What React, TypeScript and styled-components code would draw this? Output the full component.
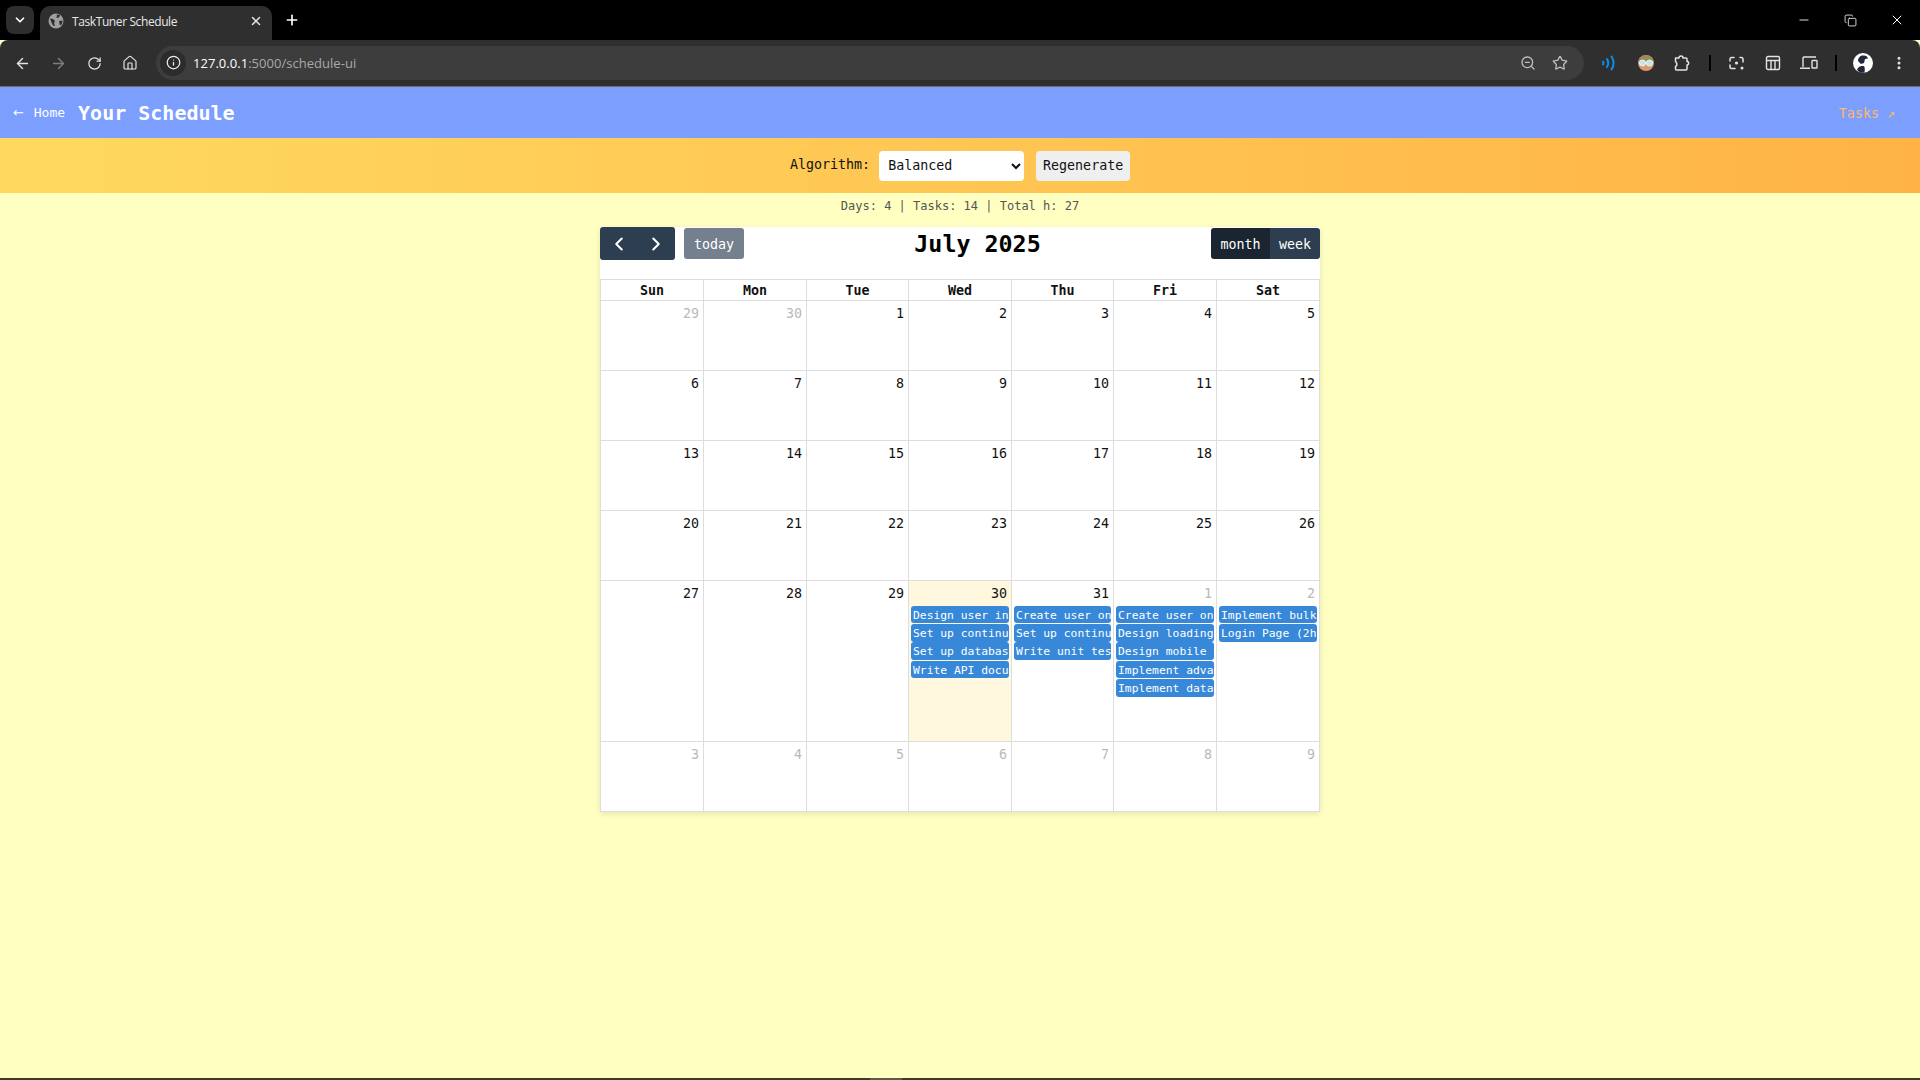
import React from "react";
import styled, { createGlobalStyle } from "styled-components";
import {
    ArrowLeft, ArrowRight, ChevronDown, ChevronLeft, ChevronRight, Copy, EllipsisVertical, House, Info, Minus,
    Plus, RotateCw, Star, X, ZoomOut,
} from "lucide-react";

const GlobalStyle = createGlobalStyle`
    html, body { margin: 0; padding: 0; height: 100%; overflow: hidden; }
    body { font-family: "DejaVu Sans Mono", "Liberation Mono", monospace; background: #ffffc2; }
`;

const Page = styled.div`
    height: 1080px;
    display: flex;
    flex-direction: column;
    background: #ffffc2;
`;

/* browser chrome */
const TabStrip = styled.div`
    height: 40px;
    background: #000;
    display: flex;
    align-items: flex-end;
    padding-left: 6px;
    color: #fff;
`;
const TabMenu = styled.div`
    width: 28px;
    height: 28px;
    margin-bottom: 6px;
    border-radius: 8px;
    background: #2e2e2e;
    display: flex;
    align-items: center;
    justify-content: center;
`;
const Tab = styled.div`
    width: 232px;
    height: 34px;
    margin-left: 6px;
    box-sizing: border-box;
    padding: 0 9px 4px 8px;
    background: #2f2f2f;
    border-radius: 10px 10px 0 0;
    display: flex;
    align-items: center;
    gap: 8px;
    font: 12px "Open Sans", sans-serif;
    color: #e8e8e8;
`;
const TabTitle = styled.span`
    flex: 1;
    letter-spacing: -0.4px;
`;
const NewTab = styled.div`
    width: 20px;
    margin: 0 0 10px 10px;
    height: 20px;
    display: flex;
    align-items: center;
    justify-content: center;
`;
const WindowControls = styled.div`
    margin-left: auto;
    height: 40px;
    display: flex;
    align-items: center;
    padding-right: 15px;
    gap: 32.5px;
`;
const Toolbar = styled.div`
    box-sizing: border-box;
    background: #2f2f2f;
    border-radius: 8px 8px 0 0;
    border-bottom: 1px solid #6d6d6d;
    height: 47px;
    display: flex;
    align-items: center;
    padding: 0 12px 0 12px;
    color: #e3e3e3;
`;
const NavIcon = styled.div<{ $w?: number; $dim?: boolean }>`
    width: ${p => p.$w ?? 36}px;
    height: 28px;
    flex: none;
    display: flex;
    align-items: center;
    justify-content: center;
    color: ${p => (p.$dim ? "#7d7d7d" : "#e3e3e3")};
    &:first-child { width: 20px; margin-right: 8px; }
`;
const UrlPill = styled.div`
    width: 1428px;
    margin-left: 8px;
    flex: none;
    height: 34px;
    border-radius: 17px;
    background: #3d3d3d;
    display: flex;
    align-items: center;
    padding: 0 16px 0 4px;
    box-sizing: border-box;
    font: 13px "Open Sans", sans-serif;
    letter-spacing: 0.03px;
    color: #a9a9a9;
    margin-bottom: 1px;
`;
const InfoBadge = styled.div`
    width: 26px;
    height: 26px;
    border-radius: 50%;
    background: #2c2c2c;
    color: #eee;
    display: flex;
    align-items: center;
    justify-content: center;
    margin-right: 7px;
`;
const UrlHost = styled.span`
    color: #fff;
`;
const UrlActions = styled.div`
    margin-left: auto;
    display: flex;
    gap: 16px;
    color: #bdbdbd;
`;
const ToolSep = styled.div<{ $first?: boolean }>`
    width: 2px;
    height: 16px;
    flex: none;
    background: #000;
    margin: 0 8px 0 ${p => (p.$first ? 3 : 8)}px;
`;

/* app header */
const Header = styled.header`
    height: 51px;
    background: #7b9eff;
    display: flex;
    align-items: center;
    padding: 0 25px 0 13px;
`;
const HomeLink = styled.a`
    color: #fff;
    font-size: 13px;
    margin-right: 13px;
`;
const ArrowGlyph = styled.span`
    font-family: "DejaVu Sans", sans-serif;
    margin-right: 2px;
`;
const Title = styled.h1`
    margin: 0;
    color: #fff;
    font-size: 20px;
    font-weight: 700;
`;
const TasksLink = styled.a`
    margin-left: auto;
    padding-top: 1px;
    color: #ffb866;
    font-size: 13.33px;
`;
const Controls = styled.div`
    height: 55px;
    background: linear-gradient(90deg, #ffd95e 0%, #ffb347 100%);
    display: flex;
    align-items: center;
    justify-content: center;
    font-size: 13.33px;
    color: #111;
`;
const AlgoLabel = styled.label`
    margin: 0 9px 2px 0;
`;
const AlgoSelect = styled.select`
    width: 145px;
    height: 30px;
    font: 13.33px "DejaVu Sans Mono", monospace;
    border: none;
    border-radius: 4px;
    background-color: #fff;
    color: #111;
    padding: 0 5px;
    margin-right: 12px;
`;
const RegenButton = styled.button`
    width: 94px;
    height: 30px;
    font: 13.33px "DejaVu Sans Mono", monospace;
    border: none;
    border-radius: 4px;
    background: #efefef;
    color: #111;
    padding: 0;
`;
const Stats = styled.div`
    height: 34px;
    box-sizing: border-box;
    padding-top: 6px;
    line-height: 14px;
    text-align: center;
    font-size: 12px;
    color: #555;
`;
const Main = styled.main`
    flex: 1;
`;

/* calendar */
const Calendar = styled.div`
    width: 720px;
    margin: 0 auto;
    background: #fff;
    box-shadow: 0 2px 6px rgba(0, 0, 0, 0.1);
    font-size: 13.33px;
    color: #111;
`;
const CalToolbar = styled.div`
    height: 52px;
    display: flex;
    align-items: flex-start;
    justify-content: space-between;
`;
const ToolGroup = styled.div`
    display: flex;
    align-items: flex-start;
`;
const ButtonGroup = styled.div`
    display: flex;
`;
const NavButton = styled.button<{ $side: "l" | "r" }>`
    width: 37.5px;
    height: 33px;
    border: none;
    background: #2c3e50;
    color: #fff;
    padding: 0;
    display: flex;
    align-items: center;
    justify-content: center;
    border-radius: ${p => (p.$side === "l" ? "3px 0 0 3px" : "0 3px 3px 0")};
`;
const TodayButton = styled.button`
    width: 60px;
    height: 31px;
    margin: 1px 0 0 9px;
    border: none;
    border-radius: 3px;
    background: #75808e;
    color: #fff;
    font: 13.33px "DejaVu Sans Mono", monospace;
    padding: 1px 0 0;
`;
const CalTitle = styled.h2`
    margin: 2px 0 0;
    font-size: 23.33px;
    line-height: 30px;
    font-weight: 700;
    color: #000;
`;
const ViewButton = styled.button<{ $active?: boolean }>`
    height: 31px;
    width: ${p => (p.$active ? 59 : 50)}px;
    margin-top: 1px;
    border: none;
    background: ${p => (p.$active ? "#1a252f" : "#2c3e50")};
    color: #fff;
    font: 13.33px "DejaVu Sans Mono", monospace;
    padding: 1px 0 0;
    border-radius: ${p => (p.$active ? "3px 0 0 3px" : "0 3px 3px 0")};
`;
const Grid = styled.div`
    display: grid;
    grid-template-columns: 103px 103px 102px 103px 102px 103px 103px;
    grid-template-rows: 21px 70px 70px 70px 70px 161px 69px;
    border-top: 1px solid #ddd;
    border-right: 1px solid #ddd;
    border-bottom: 1px solid #ddd;
`;
const DayHead = styled.div`
    border-left: 1px solid #ddd;
    border-bottom: 1px solid #ddd;
    font-weight: 700;
    text-align: center;
    line-height: 21px;
`;
const Cell = styled.div<{ $today?: boolean }>`
    border-left: 1px solid #ddd;
    border-bottom: 1px solid #ddd;
    background: ${p => (p.$today ? "#fff8df" : "#fff")};
    min-width: 0;
    &:nth-last-child(-n + 7) { border-bottom: none; }
`;
const DayNumber = styled.div<{ $muted?: boolean }>`
    text-align: right;
    padding: 4px 4px 0 0;
    height: 20.67px;
    line-height: 18px;
    color: ${p => (p.$muted ? "#b9b9b9" : "#111")};
`;
const EventPill = styled.div`
    margin: 0 2px 0.66px 2px;
    height: 17.67px;
    line-height: 18px;
    background: #3788d8;
    color: #fff;
    font-size: 11.33px;
    border-radius: 3px;
    padding: 0 0 0 2px;
    white-space: nowrap;
    overflow: hidden;
`;
const BottomEdge = styled.div`
    height: 2px;
    background: #3b3a2d;
    display: flex;
    padding-left: 870px;
`;
const BottomThumb = styled.div`
    width: 32px;
    background: #5a5a50;
`;

const headers = ["Sun", "Mon", "Tue", "Wed", "Thu", "Fri", "Sat"];

type Day = { n: number; muted?: boolean; today?: boolean; events?: string[] };

const days: Day[] = [
    { n: 29, muted: true }, { n: 30, muted: true },
    ...Array.from({ length: 28 }, (_, i) => ({ n: i + 1 })),
    { n: 29 },
    { n: 30, today: true, events: ["Design user interface mockups (2h)", "Set up continuous integration (2h)", "Set up database schema (2h)", "Write API documentation (2h)"] },
    { n: 31, events: ["Create user onboarding flow (2h)", "Set up continuous deployment (2h)", "Write unit tests (2h)"] },
    { n: 1, muted: true, events: ["Create user onboarding (2h)", "Design loading states (2h)", "Design mobile layout (2h)", "Implement advanced search (2h)", "Implement data export (2h)"] },
    { n: 2, muted: true, events: ["Implement bulk actions (2h)", "Login Page (2h)"] },
    ...[3, 4, 5, 6, 7, 8, 9].map(n => ({ n, muted: true })),
];

const FaviconGlobe = () => (
    <svg width="16" height="16" viewBox="0 0 16 16">
        <circle cx="8" cy="8" r="7.5" fill="#9f9f9f" />
        <path d="M2 5.500l3 .5 2 2-1 2 1 3-2-.5-1.500-3zM9 1.500l3 .5-1 2.500-2.500.5zM11 8l3.500-.5-.5 3.500-2 1.500z" fill="#2f2f2f" />
    </svg>
);

const SoundIcon = () => (
    <svg width="18" height="16" viewBox="0 0 18 16" fill="none" stroke="#0a8fe8" strokeWidth="2" strokeLinecap="round">
        <path d="M3 6.500c.7 1 .7 2 0 3" />
        <path d="M7 4c1.600 2.600 1.600 5.400 0 8" />
        <path d="M11.500 1.500c2.600 4 2.600 9 0 13" />
    </svg>
);

const GlassesAvatar = () => (
    <svg width="18" height="18" viewBox="0 0 18 18">
        <circle cx="9" cy="9" r="8" fill="#d99a70" />
        <path d="M1.500 7a7.800 7.800 0 0 1 15 0z" fill="#9b8a5a" />
        <circle cx="5.500" cy="9" r="3" fill="#bfe6ee" stroke="#e8f6f8" />
        <circle cx="12.500" cy="9" r="3" fill="#bfe6ee" stroke="#e8f6f8" />
    </svg>
);

const ExtensionIcon = () => (
    <svg width="17" height="16" viewBox="0 0 17 16" fill="none" stroke="#e3e3e3" strokeWidth="1.500" strokeLinejoin="round">
        <path d="M1.500 3h3.500a2 2 0 0 1 4 0h3a1 1 0 0 1 1 1v2.500a1.700 1.700 0 0 1 0 3.400V14a1 1 0 0 1-1 1H2.500a1 1 0 0 1-1-1v-2.500a2.500 2.500 0 0 0 1-3.500 3 3 0 0 0-1-1.500z" />
    </svg>
);

const LensIcon = () => (
    <svg width="16" height="16" viewBox="0 0 16 16" fill="none" stroke="#e3e3e3" strokeWidth="1.500" strokeLinecap="round">
        <path d="M1 6V4a1.500 1.500 0 0 1 1.500-1.500H5M11 2.500h1.500A1.500 1.500 0 0 1 14 4v3M1 10v2a1.500 1.500 0 0 0 1.500 1.500H6" />
        <circle cx="7.500" cy="8" r="1.600" fill="#e3e3e3" stroke="none" />
        <circle cx="13" cy="13" r="1.500" fill="#e3e3e3" stroke="none" />
    </svg>
);

const TableIcon = () => (
    <svg width="16" height="16" viewBox="0 0 16 16" fill="none" stroke="#e3e3e3" strokeWidth="1.400">
        <rect x="1.500" y="1.500" width="13" height="13" rx="1.500" />
        <path d="M1.500 5.500h13M6 5.500v9M10 5.500v9" />
    </svg>
);

const DeviceIcon = () => (
    <svg width="18" height="14" viewBox="0 0 18 14" fill="none" stroke="#e3e3e3" strokeWidth="1.400">
        <path d="M3 11V2a1 1 0 0 1 1-1h12M0 12.300h10" />
        <rect x="12" y="4.500" width="5" height="7.500" rx=".6" />
    </svg>
);

const ProfileAvatar = () => (
    <svg width="20" height="20" viewBox="0 0 20 20">
        <circle cx="10" cy="10" r="10" fill="#fff" />
        <path d="M5 8c0-4 3-6 6-5.500 2 .3 3.500 1 4 3l-3 .5-1 4-3 1z" fill="#20283c" />
        <path d="M4 16.500c2-3.500 4-3.500 6-3.500s2 2 1.500 6.800L8 19.800c-2-.6-3-2-4-3.300z" fill="#20283c" />
    </svg>
);

export default function App() {
    return (
        <Page>
            <GlobalStyle />
            <TabStrip>
                <TabMenu><ChevronDown size={14} strokeWidth={3} /></TabMenu>
                <Tab>
                    <FaviconGlobe />
                    <TabTitle>TaskTuner Schedule</TabTitle>
                    <X size={14} strokeWidth={2.5} />
                </Tab>
                <NewTab><Plus size={16} strokeWidth={2.5} /></NewTab>
                <WindowControls>
                    <Minus size={14} strokeWidth={1.5} />
                    <Copy size={13} strokeWidth={1.5} />
                    <X size={16} strokeWidth={1.5} />
                </WindowControls>
            </TabStrip>
            <Toolbar>
                <NavIcon><ArrowLeft size={17} strokeWidth={2} /></NavIcon>
                <NavIcon $dim><ArrowRight size={17} strokeWidth={2} /></NavIcon>
                <NavIcon><RotateCw size={15} strokeWidth={2} /></NavIcon>
                <NavIcon><House size={16} strokeWidth={1.8} /></NavIcon>
                <UrlPill>
                    <InfoBadge><Info size={15} strokeWidth={2} /></InfoBadge>
                    <span><UrlHost>127.0.0.1</UrlHost>:5000/schedule-ui</span>
                    <UrlActions>
                        <ZoomOut size={16} strokeWidth={2} />
                        <Star size={16} strokeWidth={2} />
                    </UrlActions>
                </UrlPill>
                <NavIcon $w={50}><SoundIcon /></NavIcon>
                <NavIcon $w={24}><GlassesAvatar /></NavIcon>
                <NavIcon $w={48}><ExtensionIcon /></NavIcon>
                <ToolSep $first />
                <NavIcon $w={36}><LensIcon /></NavIcon>
                <NavIcon $w={36}><TableIcon /></NavIcon>
                <NavIcon $w={36}><DeviceIcon /></NavIcon>
                <ToolSep />
                <NavIcon $w={36}><ProfileAvatar /></NavIcon>
                <NavIcon $w={36}><EllipsisVertical size={16} strokeWidth={2.5} /></NavIcon>
            </Toolbar>
            <Header>
                <HomeLink><ArrowGlyph>←</ArrowGlyph> Home</HomeLink>
                <Title>Your Schedule</Title>
                <TasksLink>Tasks ↗</TasksLink>
            </Header>
            <Controls>
                <AlgoLabel>Algorithm:</AlgoLabel>
                <AlgoSelect defaultValue="balanced">
                    <option value="balanced">Balanced</option>
                </AlgoSelect>
                <RegenButton>Regenerate</RegenButton>
            </Controls>
            <Stats>Days: 4 | Tasks: 14 | Total h: 27</Stats>
            <Main>
                <Calendar>
                    <CalToolbar>
                        <ToolGroup>
                            <ButtonGroup>
                                <NavButton $side="l"><ChevronLeft size={22} strokeWidth={2.2} /></NavButton>
                                <NavButton $side="r"><ChevronRight size={22} strokeWidth={2.2} /></NavButton>
                            </ButtonGroup>
                            <TodayButton>today</TodayButton>
                        </ToolGroup>
                        <CalTitle>July 2025</CalTitle>
                        <ButtonGroup>
                            <ViewButton $active>month</ViewButton>
                            <ViewButton>week</ViewButton>
                        </ButtonGroup>
                    </CalToolbar>
                    <Grid>
                        {headers.map(h => <DayHead key={h}>{h}</DayHead>)}
                        {days.map((d, i) => (
                            <Cell key={i} $today={d.today}>
                                <DayNumber $muted={d.muted}>{d.n}</DayNumber>
                                {d.events?.map(e => <EventPill key={e}>{e}</EventPill>)}
                            </Cell>
                        ))}
                    </Grid>
                </Calendar>
            </Main>
            <BottomEdge><BottomThumb /></BottomEdge>
        </Page>
    );
}
